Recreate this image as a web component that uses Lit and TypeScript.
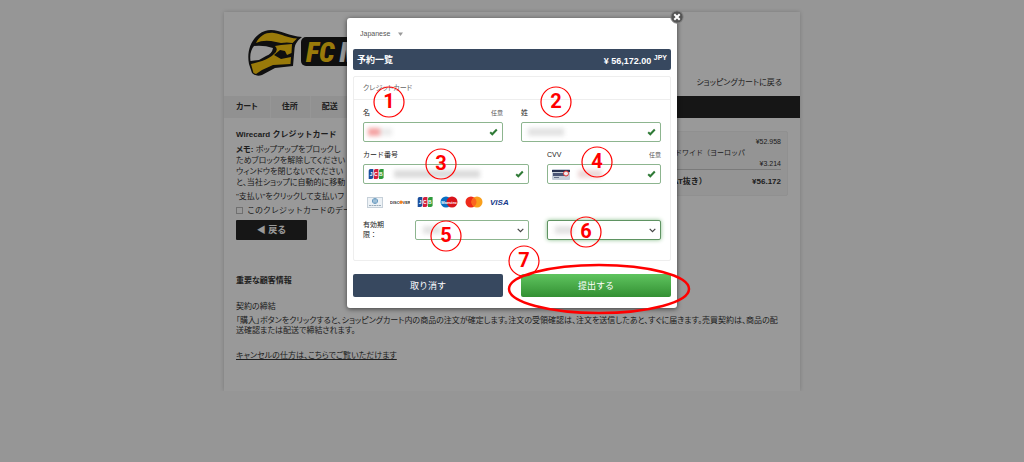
import { LitElement, html, svg, css } from "lit";
import { customElement, property } from "lit/decorators.js";

const jcb = html`<svg class="jcb" width="16" height="12" viewBox="0 0 16 12" role="img" aria-label="JCB">
  <path fill="#1b4f9c" d="M2.500 1H5.300V9.200Q5.300 11 3.300 11H.7V2.800Q.7 1 2.500 1Z" />
  <path fill="#d21f3c" d="M7.700 1H10.400V9.200Q10.400 11 8.500 11H5.900V2.800Q5.900 1 7.700 1Z" />
  <path fill="#2e9a3b" d="M12.900 1H15.600V9.200Q15.600 11 13.700 11H11V2.800Q11 1 12.900 1Z" />
  <text x="8.200" y="7.700" text-anchor="middle" font-size="5" font-weight="700" fill="#fff">J C B</text>
</svg>`;

const check = html`<svg class="check" width="9" height="8" viewBox="0 0 9 8" aria-hidden="true">
  <path d="M1.200 4.300L3.300 6.300L7.800 1.500" fill="none" stroke="#2f7a36" stroke-width="2" />
</svg>`;

@customElement("app-root")
export class AppRoot extends LitElement {
  static styles = css`
    :host {
      display: block;
      min-height: 100vh;
      position: relative;
      background: #fafafa;
      color: #333;
      font: 8px/10px "Liberation Sans", "Noto Sans CJK JP", sans-serif;
    }
    * { box-sizing: border-box; }
    h1, h2, p { margin: 0; font-size: inherit; }
    .page { padding: 12px 16px 0; overflow: hidden; }
    .sheet {
      max-width: 576px;
      margin: 0 auto;
      background: #fff;
      box-shadow: 0 0 4px #ccc;
      padding-bottom: 30px;
    }
    .top {
      display: flex;
      justify-content: space-between;
      align-items: flex-end;
      padding: 12px 18px 8px 22px;
      height: 84px;
    }
    .logo { align-self: flex-start; }
    .brand { font: italic 900 28px "Roboto Condensed", "Liberation Sans Narrow", Roboto, sans-serif; }
    a { color: inherit; }
    .top, nav, .legal, .panel h2, .pay p { font-feature-settings: "palt"; }
    .back-link { text-decoration: none; }
    nav { display: flex; height: 22px; background: #262626; }
    nav a {
      padding: 6px 12px 6px 11px;
      background: #f2f2f2;
      border-right: 1px solid #fafafa;
      text-decoration: none;
      font-weight: 700;
    }
    nav a:first-child { padding-left: 12px; }
    .body { display: flex; justify-content: space-between; padding: 11px 12px 0; }
    .pay { line-height: 11px; white-space: nowrap; }
    .pay h1 { margin-bottom: 4px; }
    .pay p { margin-bottom: 3px; }
    .remember { display: flex; align-items: center; gap: 4px; }
    .remember input {
      appearance: none;
      width: 7px;
      height: 7px;
      margin: 0;
      border: 1px solid #bbb;
      background: #fff;
    }
    .back {
      display: block;
      margin-top: 4px;
      width: 71px;
      height: 20px;
      padding: 0;
      border: 0;
      border-radius: 1px;
      background: #262626;
      color: #fff;
      font: inherit;
      font-size: 9px;
      font-weight: 700;
    }
    .summary {
      width: 200px;
      height: 65px;
      margin-top: 2px;
      padding: 4px 6px;
      background: #f7f7f7;
      border: 1px solid #f0f0f0;
      border-radius: 2px;
    }
    .summary table { width: 100%; border-collapse: collapse; }
    .summary td { padding: 0; font-size: 7px; line-height: 11px; white-space: nowrap; }
    .summary td:first-child { padding-left: 80px; }
    .summary td:last-child { text-align: right; }
    .summary .sum td { border-top: 1px solid #ccc; padding-top: 6px; font-weight: 700; font-size: 8px; }
    .summary .sum td:first-child { padding-left: 65px; }
    .legal { padding: 36px 16px 0 12px; }
    .legal h2 { margin-bottom: 16px; }
    .legal p { margin-bottom: 4px; }
    .legal .cancel { margin-top: 15px; margin-bottom: 0; }

    .overlay {
      position: absolute;
      inset: 0;
      background: rgba(0, 0, 0, 0.4);
      padding: 18px 16px 0;
    }
    .modal {
      position: relative;
      max-width: 330px;
      margin: 0 auto;
      padding: 10px 6px 11px;
      border-radius: 3px;
      background: #fff;
      box-shadow: 0 1px 5px rgba(0, 0, 0, 0.6);
      font-size: 7px;
    }
    .close {
      position: absolute;
      top: -8px;
      right: -7px;
      width: 14px;
      height: 14px;
      padding: 0;
      border: 0;
      background: none;
    }
    .close svg { display: block; }
    .lang { display: flex; height: 21px; padding-left: 7px; }
    select {
      appearance: none;
      margin: 0;
      font: inherit;
      color: #555;
      border: 0;
      background: transparent;
      padding: 0;
    }
    .lang select { height: 11px; width: 38px; }
    .lang svg { margin-top: 4px; }
    .bar {
      display: flex;
      justify-content: space-between;
      align-items: center;
      height: 21px;
      padding: 0 4px;
      border-radius: 2px;
      background: #37485f;
      color: #fff;
      font-weight: 700;
      font-size: 9px;
    }
    .bar sup { font-size: 7px; line-height: 7px; }
    .panel {
      margin-top: 6px;
      border: 1px solid #eee;
      border-radius: 2px;
      padding-bottom: 20px;
    }
    .panel h2 {
      padding: 6px 9px;
      border-bottom: 1px solid #eee;
      font-weight: 400;
      color: #666;
    }
    .rows { display: grid; gap: 8px; padding: 8px 9px 0; }
    .row { display: grid; grid-template-columns: 1fr 1fr; gap: 18px; }
    .wide { grid-template-columns: 166fr 114fr; }
    .head { display: flex; justify-content: space-between; height: 14px; color: #222; }
    .opt { font-size: 6px; color: #555; }
    .field { display: grid; align-items: center; }
    .field > * { grid-area: 1 / 1; }
    .field input, .field select {
      width: 100%;
      height: 20px;
      border: 1px solid #8db58f;
      border-radius: 2px;
      background: #fff;
      padding: 0 16px;
      outline: 0;
    }
    .field .focus { border-color: #5f9362; box-shadow: 0 0 4px #8cc08e; }
    .check, .chev { justify-self: end; margin-right: 5px; pointer-events: none; }
    .field .jcb, .cvv { margin-left: 5px; }
    .smudge {
      height: 8px;
      filter: blur(2px);
      background: #e3e3e3;
      pointer-events: none;
    }
    .s-first { width: 24px; margin-left: 5px; background: linear-gradient(90deg, #f4a3a3 45%, #ececec 55%); }
    .s-last { width: 36px; margin-left: 7px; }
    .s-card { width: 86px; margin-left: 31px; background: #dcdcdc; }
    .s-cvv { width: 24px; margin-left: 31px; background: #ecd8d8; }
    .s-sel { width: 18px; margin-left: 8px; }
    .brands { display: flex; align-items: center; gap: 7px; height: 20px; padding-left: 4px; }
    .expiry { display: grid; grid-template-columns: 52fr 114fr; align-items: center; }
    .expiry label { padding-right: 28px; color: #222; }
    .actions { display: grid; grid-template-columns: 1fr 1fr; gap: 18px; margin-top: 13px; }
    .actions button {
      height: 23px;
      padding: 0;
      border: 0;
      border-radius: 2px;
      background: #37485f;
      color: #fff;
      font: inherit;
      font-size: 9px;
    }
    .actions .submit { background: linear-gradient(#5fc45f, #339033); }
    .marks { position: absolute; top: 0; left: 0; overflow: visible; pointer-events: none; }
    .marks text { font: 700 20px Roboto, sans-serif; fill: #f00; text-anchor: middle; }
    .marks circle, .marks ellipse { fill: none; stroke: #f00; }
  `;

  @property({ attribute: false })
  marks = [
    [42, 84], [209, 84], [94, 146], [250, 144], [99, 218], [239, 214], [177, 243],
  ];

  private chevron() {
    return html`<svg class="chev" width="7" height="5" viewBox="0 0 7 5" aria-hidden="true">
      <path d="M.7.8L3.500 3.700L6.300.8" fill="none" stroke="#444" stroke-width="1.200" />
    </svg>`;
  }

  render() {
    return html`
      <div class="page">
        <main class="sheet">
          <header class="top">
            <svg class="logo" width="130" height="54" viewBox="246 24 130 54" role="img" aria-label="FC">
              <path d="M249 64C246 49 253 35 265 31C276 27 287 36 302 37C297 41 295 44 294.500 49L293 66L275 68L262 75Q256 77 252 73Z" fill="#191919" />
              <path d="M256 43C260 35 267 32 274 33C282 34 287 38 297 38.500L292.500 43Q287 42 281 43L271 41Q262 40 256 43Z" fill="#fc1" />
              <path d="M250.500 61C249.500 54 251.500 49 254 46Q264 45 273 48Q272 54 266 56L259 60Z" fill="#fff" />
              <path d="M281 45L292 44L291.500 53L287 55L285 51L280 50L274 55L281 59L291 57L290.500 64L273 65L262 70L256 74L253.500 73L251 64L262 61Q270 58 274 54Q279 50 275 46Z" fill="#fc1" />
              <rect x="301" y="37" width="74" height="29" rx="5" fill="#191919" />
              <text class="brand" x="306" y="62" fill="#fc1">FC<tspan fill="#fff" dx="5">M</tspan></text>
            </svg>
            <a class="back-link" href="#cart">ショッピングカートに戻る</a>
          </header>
          <nav>
            <a href="#cart">カート</a><a href="#address">住所</a><a href="#delivery">配送</a>
          </nav>
          <div class="body">
            <section class="pay">
              <h1>Wirecard クレジットカード</h1>
              <p>
                <b>メモ:</b> ポップアップをブロックし<br />ためブロックを解除してください<br />ウィンドウを閉じないでください<br />と、当社ショップに自動的に移動
              </p>
              <p>"支払い"をクリックして支払いフ</p>
              <label class="remember"><input type="checkbox" />このクレジットカードのデータ</label>
              <button class="back" type="button">◀ 戻る</button>
            </section>
            <aside class="summary">
              <table>
                <tr><td></td><td>¥52.958</td></tr>
                <tr><td>ドワイド（ヨーロッパ</td><td></td></tr>
                <tr><td></td><td>¥3.214</td></tr>
                <tr class="sum"><td>（VAT抜き）</td><td>¥56.172</td></tr>
              </table>
            </aside>
          </div>
          <section class="legal">
            <h2>重要な顧客情報</h2>
            <p>契約の締結</p>
            <p>「購入」ボタンをクリックすると、ショッピングカート内の商品の注文が確定します。注文の受領確認は、注文を送信したあと、すぐに届きます。売買契約は、商品の配送確認または配送で締結されます。</p>
            <p class="cancel"><a href="#cancel">キャンセルの仕方は、こちらでご覧いただけます</a></p>
          </section>
        </main>
      </div>

      <div class="overlay">
        <form class="modal" role="dialog" aria-label="クレジットカード">
          <div class="lang">
            <select aria-label="Language"><option>Japanese</option></select>
            <svg width="5" height="4" viewBox="0 0 5 4" aria-hidden="true"><path d="M0 .5H5L2.500 4Z" fill="#999" /></svg>
          </div>
          <div class="bar"><span>予約一覧</span><span>¥ 56,172.00 <sup>JPY</sup></span></div>
          <div class="panel">
            <h2>クレジットカード</h2>
            <div class="rows">
              <div class="row">
                <div>
                  <div class="head"><label for="first">名</label><span class="opt">任意</span></div>
                  <div class="field"><input id="first" /><span class="smudge s-first"></span>${check}</div>
                </div>
                <div>
                  <div class="head"><label for="last">姓</label></div>
                  <div class="field"><input id="last" /><span class="smudge s-last"></span>${check}</div>
                </div>
              </div>
              <div class="row wide">
                <div>
                  <div class="head"><label for="card">カード番号</label></div>
                  <div class="field"><input id="card" />${jcb}<span class="smudge s-card"></span>${check}</div>
                </div>
                <div>
                  <div class="head"><label for="cvv">CVV</label><span class="opt">任意</span></div>
                  <div class="field">
                    <input id="cvv" />
                    <svg class="cvv" width="18" height="11" viewBox="0 0 18 11" aria-hidden="true">
                      <rect width="18" height="11" rx="1" fill="#c5ced8" />
                      <rect y="1" width="18" height="2" fill="#26304f" />
                      <rect x="1" y="4" width="11" height="3" fill="#4a5575" />
                      <rect x="2" y="8" width="5" height="1" fill="#66718a" />
                      <circle cx="14" cy="4.500" r="2.500" fill="#eee" stroke="#d33" />
                    </svg>
                    <span class="smudge s-cvv"></span>${check}
                  </div>
                </div>
              </div>
              <div class="brands">
                <svg width="16" height="11" viewBox="0 0 16 11" role="img" aria-label="Diners Club">
                  <rect x=".5" y=".5" width="15" height="10" fill="#edf2f6" stroke="#c6d0d9" />
                  <circle cx="8" cy="4" r="2.800" fill="#3f7fae" /><path d="M7 2.200V5.800M9 2.200V5.800" stroke="#fff" />
                  <path d="M2 8.500H14" stroke="#9aabb9" stroke-dasharray="2 .5" />
                </svg>
                <svg width="20" height="8" viewBox="0 0 20 8" role="img" aria-label="Discover">
                  <text x="0" y="5.800" font-size="4" font-weight="700" fill="#333">DISC</text>
                  <circle cx="11" cy="4.300" r="1.700" fill="#f58220" />
                  <text x="12.500" y="5.800" font-size="4" font-weight="700" fill="#333">VER</text>
                </svg>
                ${jcb}
                <svg width="18" height="12" viewBox="0 0 18 12" role="img" aria-label="Maestro">
                  <circle cx="6" cy="6" r="5.500" fill="#0a6fc2" /><circle cx="12" cy="6" r="5.500" fill="#d8131b" />
                  <text x="9" y="7.500" text-anchor="middle" font-size="4" font-weight="700" fill="#fff">Maestro</text>
                </svg>
                <svg width="18" height="12" viewBox="0 0 18 12" role="img" aria-label="Mastercard">
                  <circle cx="6" cy="6" r="5.500" fill="#ee2a1b" /><circle cx="12" cy="6" r="5.500" fill="#f99f1c" />
                  <path d="M9 1.400A5.500 5.500 0 0 1 9 10.600A5.500 5.500 0 0 1 9 1.400Z" fill="#fb6520" />
                </svg>
                <svg width="20" height="10" viewBox="0 0 20 10" role="img" aria-label="VISA">
                  <text x="0" y="8" font-size="8" font-weight="700" font-style="italic" fill="#163a8a">VISA</text>
                </svg>
              </div>
              <div class="row wide">
                <div class="expiry">
                  <label for="month">有効期限：</label>
                  <div class="field"><select id="month"><option></option></select><span class="smudge s-sel"></span>${this.chevron()}</div>
                </div>
                <div class="field"><select id="year" class="focus" aria-label="年"><option></option></select><span class="smudge s-sel"></span>${this.chevron()}</div>
              </div>
            </div>
          </div>
          <div class="actions">
            <button type="button">取り消す</button>
            <button type="button" class="submit">提出する</button>
          </div>
          <button class="close" type="button" aria-label="Close">
            <svg width="14" height="14" viewBox="0 0 14 14">
              <circle cx="7" cy="7" r="6.200" fill="#555" stroke="#888" />
              <path d="M4.300 4.300L9.700 9.700M9.700 4.300L4.300 9.700" stroke="#fff" stroke-width="2" />
            </svg>
          </button>
          <svg class="marks" width="330" height="290" viewBox="0 0 330 290">
            ${this.marks.map(
              ([x, y], i) => svg`<circle cx=${x} cy=${y} r="15" stroke-width="1.200" /><text x=${x} y=${y + 6}>${i + 1}</text>`
            )}
            <ellipse cx="252" cy="271" rx="90" ry="24" stroke-width="2.500" />
          </svg>
        </form>
      </div>
    `;
  }
}
